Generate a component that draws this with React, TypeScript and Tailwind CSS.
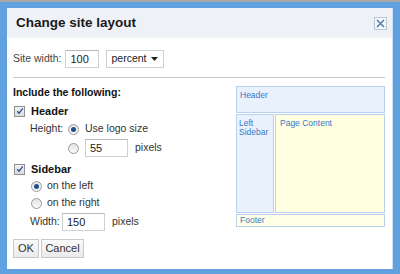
import React from "react";

const font = { fontFamily: '"Liberation Sans", Arial, sans-serif' };

function Checkbox() {
  return (
    <span className="flex h-[11px] w-[11px] items-center justify-center border border-[#8f8f8f] bg-gradient-to-b from-[#f2f2f2] to-[#dcdcdc]">
      <svg width="8" height="8" viewBox="0 0 8 8" fill="none" stroke="#2a4f9a" strokeWidth="1.3">
        <path d="M1.2 4.2 L3 6.2 L6.8 1.3" />
      </svg>
    </span>
  );
}

function Radio({ on }: { on?: boolean }) {
  return (
    <span className="flex h-[11px] w-[11px] items-center justify-center rounded-full border border-[#9a9a9a] bg-gradient-to-b from-[#e4e4e4] to-[#fafafa]">
      {on && <span className="h-[5px] w-[5px] rounded-full bg-[#1f4f8c]" />}
    </span>
  );
}

function TextInput({ value, w }: { value: string; w: string }) {
  return (
    <span className={`flex h-[18px] ${w} items-center border border-[#d0d0d0] border-t-[#b8b8b8] bg-white pl-[4px] text-[11px] text-[#222]`}>
      {value}
    </span>
  );
}

export default function App() {
  return (
    <div style={font} className="flex h-[274px] w-[400px] flex-col overflow-hidden bg-[#62a1df]">
      <div className="h-[2px] bg-[#a9a9a9]" />
      <div className="mb-[5px] ml-[7px] mr-[7px] mt-[6px] flex flex-1 flex-col border-r border-[#cfe0f3] bg-white">
        {/* title bar */}
        <div className="flex h-[30px] items-center justify-between bg-[#eef2f7] pl-[9px] pr-[5px]">
          <span className="text-[13.5px] font-bold text-[#1a1a1a]">Change site layout</span>
          <span className="flex h-[13px] w-[13px] items-center justify-center border border-[#b7c6d9] bg-[#f4f7fb]">
            <svg width="9" height="9" viewBox="0 0 9 9" stroke="#5f7fa8" strokeWidth="1.6">
              <path d="M1 1 L8 8 M8 1 L1 8" />
            </svg>
          </span>
        </div>

        <div className="flex flex-col pl-[6px] pr-[7px]">
          {/* site width */}
          <div className="mt-[12px] flex h-[18px] items-center text-[10.5px] text-[#444]">
            <span>Site width:</span>
            <span className="ml-[4px]">
              <TextInput value="100" w="w-[34px]" />
            </span>
            <span className="ml-[7px] flex h-[18px] w-[58px] items-center justify-between border border-[#d0d0d0] bg-white pl-[4px] pr-[5px] text-[10.5px] text-[#222]">
              <span>percent</span>
              <svg width="7" height="4" viewBox="0 0 7 4">
                <path d="M0 0 H7 L3.5 4 Z" fill="#222" />
              </svg>
            </span>
          </div>

          <div className="mt-[9px] h-px bg-[#c8c8c8]" />

          <div className="flex">
            {/* options */}
            <div className="flex w-[223px] flex-col text-[10.5px] text-[#333]">
              <div className="mt-[9px] flex h-[12px] items-center font-bold text-[#111]">Include the following:</div>

              <div className="mt-[5px] flex h-[14px] items-center pl-[1px]">
                <Checkbox />
                <span className="ml-[6px] text-[11px] font-bold text-[#111]">Header</span>
              </div>

              <div className="mt-[4px] flex h-[14px] items-center pl-[17px]">
                <span className="w-[38px]">Height:</span>
                <Radio on />
                <span className="ml-[6px]">Use logo size</span>
              </div>

              <div className="mt-[3px] flex h-[18px] items-center pl-[55px]">
                <Radio />
                <span className="ml-[6px]">
                  <TextInput value="55" w="w-[43px]" />
                </span>
                <span className="ml-[7px]">pixels</span>
              </div>

              <div className="mt-[5px] flex h-[14px] items-center pl-[1px]">
                <Checkbox />
                <span className="ml-[6px] text-[11px] font-bold text-[#111]">Sidebar</span>
              </div>

              <div className="mt-[3px] flex h-[14px] items-center pl-[18px]">
                <Radio on />
                <span className="ml-[5px]">on the left</span>
              </div>

              <div className="mt-[3px] flex h-[14px] items-center pl-[18px]">
                <Radio />
                <span className="ml-[5px]">on the right</span>
              </div>

              <div className="mt-[3px] flex h-[18px] items-center pl-[17px]">
                <span className="w-[32px]">Width:</span>
                <TextInput value="150" w="w-[43px]" />
                <span className="ml-[7px]">pixels</span>
              </div>

              <div className="mt-[8px] flex gap-[2px] text-[11px] text-[#333]">
                <span className="flex h-[19px] w-[26px] items-center justify-center border border-[#c9c9c9] bg-gradient-to-b from-[#fafafa] to-[#ebebeb]">
                  OK
                </span>
                <span className="flex h-[19px] w-[43px] items-center justify-center border border-[#c9c9c9] bg-gradient-to-b from-[#fafafa] to-[#ebebeb]">
                  Cancel
                </span>
              </div>
            </div>

            {/* preview */}
            <div className="mt-[8px] flex w-[149px] flex-col gap-px text-[8.5px] leading-[9px] text-[#3b78c8]">
              <div className="h-[27px] border border-[#b9d0ee] bg-[#e9f1fc] pl-[3px] pt-[4px]">Header</div>
              <div className="flex h-[99px] gap-px">
                <div className="w-[38px] border border-[#b9d0ee] bg-[#e9f1fc] pl-[2px] pt-[4px]">
                  Left
                  <br />
                  Sidebar
                </div>
                <div className="flex-1 border border-[#b9d0ee] bg-[#ffffe1] pl-[4px] pt-[4px]">Page Content</div>
              </div>
              <div className="flex h-[13px] items-center border border-[#b9d0ee] bg-[#ffffe6] pl-[3px]">Footer</div>
            </div>
          </div>
        </div>
      </div>
    </div>
  );
}
